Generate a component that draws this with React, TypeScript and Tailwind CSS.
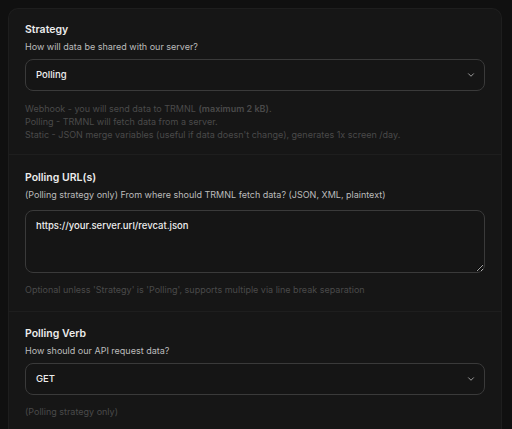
import { ChevronDown } from "lucide-react";

const font = { fontFamily: "Inter, 'Noto Sans', sans-serif" };

function Select({ value }: { value: string }) {
  return (
    <div className="flex h-[32px] items-center justify-between rounded-[8px] border border-[#3a3a3a] bg-[#151515] pl-[10px] pr-[8px]">
      <span className="text-[9.5px] font-medium text-[#ededed]">{value}</span>
      <ChevronDown className="h-[10px] w-[10px] text-[#a8a8a8]" strokeWidth={2.2} />
    </div>
  );
}

export default function App() {
  return (
    <div style={font} className="min-h-[429px] bg-[#101010] pl-[8px] pr-[10px] pt-[8px]">
      <div className="rounded-t-[10px] border border-b-0 border-[#1e1e1e] bg-[#161616]">
        <div className="px-[16px] pb-[13px] pt-[14px]">
          <p className="text-[10.5px] font-semibold leading-[14px] text-[#ececec]">Strategy</p>
          <p className="mt-[4px] text-[9px] leading-[12px] text-[#bcbcbc]">How will data be shared with our server?</p>
          <div className="mt-[6px]">
            <Select value="Polling" />
          </div>
          <div className="mt-[11px] text-[9px] leading-[13px] text-[#4a4a4a]">
            <p>Webhook - you will send data to TRMNL <b className="font-semibold">(maximum 2 kB)</b>.</p>
            <p>Polling - TRMNL will fetch data from a server.</p>
            <p>Static - JSON merge variables (useful if data doesn't change), generates 1x screen /day.</p>
          </div>
        </div>

        <div className="border-t border-[#1e1e1e] px-[16px] pb-[15px] pt-[16px]">
          <p className="text-[10.5px] font-semibold leading-[14px] text-[#ececec]">Polling URL(s)</p>
          <p className="mt-[4px] text-[9px] leading-[12px] text-[#bcbcbc]">(Polling strategy only) From where should TRMNL fetch data? (JSON, XML, plaintext)</p>
          <textarea
            readOnly
            defaultValue="https://your.server.url/revcat.json"
            className="mt-[9px] block h-[63px] w-full rounded-[8px] border border-[#3a3a3a] bg-[#151515] px-[10px] pt-[8px] text-[9.5px] font-medium leading-[13px] text-[#ededed] outline-none"
          />
          <p className="mt-[11px] text-[9px] leading-[12px] text-[#4a4a4a]">Optional unless 'Strategy' is 'Polling', supports multiple via line break separation</p>
        </div>

        <div className="border-t border-[#1e1e1e] px-[16px] pb-[16px] pt-[15px]">
          <p className="text-[10.5px] font-semibold leading-[14px] text-[#ececec]">Polling Verb</p>
          <p className="mt-[4px] text-[9px] leading-[12px] text-[#bcbcbc]">How should our API request data?</p>
          <div className="mt-[6px]">
            <Select value="GET" />
          </div>
          <p className="mt-[11px] text-[9px] leading-[12px] text-[#4a4a4a]">(Polling strategy only)</p>
        </div>
      </div>
    </div>
  );
}
